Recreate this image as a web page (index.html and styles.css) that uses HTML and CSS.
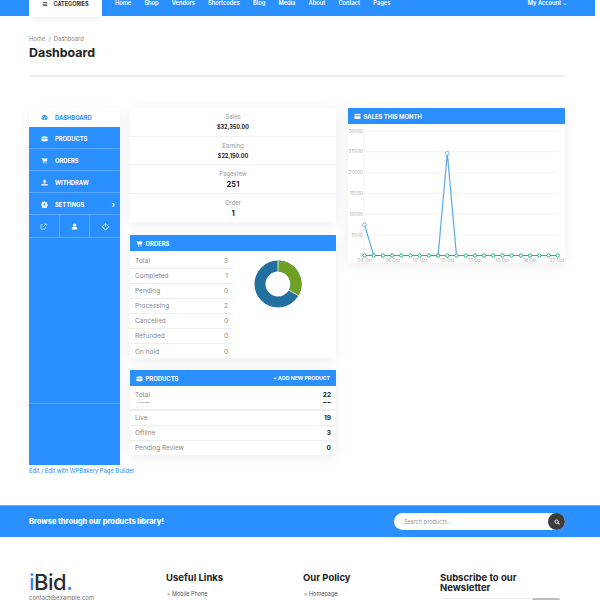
FILE: index.html
```html
<!DOCTYPE html>
<html lang="en">
<head>
    <meta charset="UTF-8">
    <meta name="viewport" content="width=device-width, initial-scale=1.0">
    <title>Dashboard</title>
    <link rel="stylesheet" href="styles.css">
</head>
<body>
    <svg class="sprite" aria-hidden="true">
        <symbol id="i-bars" viewBox="0 0 16 16"><path d="M2 3h12v2H2zM2 7h12v2H2zM2 11h12v2H2z"/></symbol>
        <symbol id="i-gauge" viewBox="0 0 16 16"><path d="M8 2a7 7 0 0 0-7 7c0 1.600.5 3 1.400 4.200h11.200A7 7 0 0 0 15 9a7 7 0 0 0-7-7zM4 10a1.300 1.300 0 1 1 0-2.600A1.300 1.300 0 0 1 4 10zm1.300-3.800a1.200 1.200 0 1 1 0-2.400 1.200 1.200 0 0 1 0 2.400zM9.400 11.500a1.500 1.500 0 0 1-2.800-1c.2-.5.600-.8 1-.9l2-4.400.9.400-1.600 4.500c.5.400.7 1.100.5 1.400zM12 10a1.300 1.300 0 1 1 0-2.600A1.300 1.300 0 0 1 12 10z"/></symbol>
        <symbol id="i-case" viewBox="0 0 16 16"><path d="M6 2h4a1 1 0 0 1 1 1v1h3a1 1 0 0 1 1 1v3H1V5a1 1 0 0 1 1-1h3V3a1 1 0 0 1 1-1zm0 2h4V3H6zM1 9h5.500v1.500h3V9H15v4a1 1 0 0 1-1 1H2a1 1 0 0 1-1-1z"/></symbol>
        <symbol id="i-cart" viewBox="0 0 16 16"><path d="M1 2h2.500l.4 1.500H15l-1.500 6H5.400l.3 1.200H13v1.300H4.600L2.500 3.300H1z"/><circle cx="6" cy="13.700" r="1.300"/><circle cx="12" cy="13.700" r="1.300"/></symbol>
        <symbol id="i-upload" viewBox="0 0 16 16"><path d="M8 1l4.500 4.500H10V10H6V5.500H3.500zM1 11.500h4V12h6v-.5h4V15H1z"/></symbol>
        <symbol id="i-gear" viewBox="0 0 16 16"><path fill-rule="evenodd" d="M6.700 1h2.600l.4 2 1.300.6 1.800-1.100 1.800 1.800-1.100 1.800.6 1.300 2 .4v2.600l-2 .4-.6 1.300 1.100 1.800-1.800 1.800-1.800-1.100-1.300.6-.4 2H6.700l-.4-2-1.300-.6-1.800 1.100-1.800-1.800 1.100-1.800-.6-1.300-2-.4V7.200l2-.4.6-1.300-1.100-1.800 1.800-1.800 1.800 1.100 1.300-.6zM8 5.500a2.500 2.500 0 1 0 0 5 2.500 2.500 0 0 0 0-5z"/></symbol>
        <symbol id="i-link" viewBox="0 0 16 16"><path d="M12 9v4a1 1 0 0 1-1 1H3a1 1 0 0 1-1-1V5a1 1 0 0 1 1-1h4" fill="none" stroke="currentColor" stroke-width="1.400"/><path d="M6.500 9.500L13 3" fill="none" stroke="currentColor" stroke-width="1.500"/><path d="M9.500 1.500H15V7z"/></symbol>
        <symbol id="i-user" viewBox="0 0 16 16"><circle cx="8" cy="5" r="3.600"/><path d="M2 15v-2.500C2 10 4 8.800 5.500 8.500c1.500 1 3.500 1 5 0C12 8.800 14 10 14 12.500V15z"/></symbol>
        <symbol id="i-power" viewBox="0 0 16 16"><path d="M8 1v7" fill="none" stroke="currentColor" stroke-width="2.200"/><path d="M4.800 3.600a6 6 0 1 0 6.400 0" fill="none" stroke="currentColor" stroke-width="2.200"/></symbol>
        <symbol id="i-card" viewBox="0 0 16 16"><path d="M2 2.500h12a1 1 0 0 1 1 1V5H1V3.500a1 1 0 0 1 1-1zM1 7.500h14v5a1 1 0 0 1-1 1H2a1 1 0 0 1-1-1z"/></symbol>
        <symbol id="i-search" viewBox="0 0 16 16"><circle cx="7" cy="7" r="4.500" fill="none" stroke="currentColor" stroke-width="2.400"/><path d="M10.500 10.500L14.500 14.500" stroke="currentColor" stroke-width="2.800"/></symbol>
    </svg>

    <header class="topbar">
        <a class="categories"><svg class="icon"><use href="#i-bars"/></svg>CATEGORIES</a>
        <nav class="main-nav">
            <a>Home</a>
            <a>Shop</a>
            <a>Vendors</a>
            <a>Shortcodes</a>
            <a>Blog</a>
            <a>Media</a>
            <a>About</a>
            <a>Contact</a>
            <a>Pages</a>
        </nav>
        <a class="account">My Account<span class="caret">⌄</span></a>
    </header>

    <section class="page-head">
        <p class="crumbs">Home&nbsp; /&nbsp; Dashboard</p>
        <h1>Dashboard</h1>
    </section>

    <main class="dash">
        <div class="side-col">
            <aside class="sidebar">
                <a class="side-link active"><svg class="icon"><use href="#i-gauge"/></svg>DASHBOARD</a>
                <a class="side-link"><svg class="icon"><use href="#i-case"/></svg>PRODUCTS</a>
                <a class="side-link"><svg class="icon"><use href="#i-cart"/></svg>ORDERS</a>
                <a class="side-link"><svg class="icon"><use href="#i-upload"/></svg>WITHDRAW</a>
                <a class="side-link"><svg class="icon"><use href="#i-gear"/></svg>SETTINGS<span class="chev">›</span></a>
                <div class="side-tools">
                    <a><svg class="icon"><use href="#i-link"/></svg></a>
                    <a><svg class="icon"><use href="#i-user"/></svg></a>
                    <a><svg class="icon"><use href="#i-power"/></svg></a>
                </div>
                <div class="side-fill"></div>
            </aside>
            <p class="edit-links"><a>Edit</a> / <a>Edit with WPBakery Page Builder</a></p>
        </div>

        <div class="mid-col">
            <div class="card stats">
                <div class="stat"><span>Sales</span><b>$32,350.00</b></div>
                <div class="stat"><span>Earning</span><b>$22,150.00</b></div>
                <div class="stat"><span>Pageview</span><b class="big">251</b></div>
                <div class="stat"><span>Order</span><b class="big">1</b></div>
            </div>

            <div class="card orders">
                <h3 class="card-title"><svg class="icon"><use href="#i-cart"/></svg>ORDERS</h3>
                <div class="orders-body">
                    <ul class="rows">
                        <li>Total<span>3</span></li>
                        <li>Completed<span>1</span></li>
                        <li>Pending<span>0</span></li>
                        <li>Processing<span>2</span></li>
                        <li>Cancelled<span>0</span></li>
                        <li>Refunded<span>0</span></li>
                        <li>On hold<span>0</span></li>
                    </ul>
                    <svg class="donut" viewBox="0 0 50 50">
                        <circle cx="25" cy="25" r="18" fill="none" stroke="#21709f" stroke-width="11"/>
                        <path d="M25 7A18 18 0 0 1 40.600 34" fill="none" stroke="#6fa024" stroke-width="11"/>
                        <path d="M25 1V13M35.500 31L46 37" stroke="#fff" stroke-width=".8"/>
                    </svg>
                </div>
            </div>

            <div class="card products">
                <h3 class="card-title"><svg class="icon"><use href="#i-case"/></svg>PRODUCTS<a class="add-new">+ ADD NEW PRODUCT</a></h3>
                <ul class="rows strong">
                    <li class="total-row">Total<span>22</span></li>
                    <li class="cut-row"><div>Total<span>22</span></div></li>
                    <li>Live<span>19</span></li>
                    <li>Offline<span>3</span></li>
                    <li>Pending Review<span>0</span></li>
                </ul>
            </div>
        </div>

        <div class="card sales">
            <h3 class="card-title"><svg class="icon"><use href="#i-card"/></svg>SALES THIS MONTH</h3>
            <svg class="chart" viewBox="348 124 217 139">
                <g class="grid-lines">
                    <path d="M364 131H558M364 151.700H558M364 172.700H558M364 193.300H558M364 214.300H558M364 235H558M364 255.500H558M364 131V255.500"/>
                </g>
                <g class="axis" text-anchor="end">
                    <text x="363" y="132.600">30000</text>
                    <text x="363" y="153.300">25000</text>
                    <text x="363" y="174.300">20000</text>
                    <text x="363" y="194.900">15000</text>
                    <text x="363" y="215.900">10000</text>
                    <text x="363" y="236.600">5000</text>
                    <text x="363" y="257">0</text>
                </g>
                <g class="axis" text-anchor="middle">
                    <text x="365" y="262">04 Oct</text>
                    <text x="392.600" y="262">06 Oct</text>
                    <text x="420.200" y="262">07 Oct</text>
                    <text x="447.400" y="262">10 Oct</text>
                    <text x="475" y="262">13 Oct</text>
                    <text x="502.400" y="262">16 Oct</text>
                    <text x="530" y="262">18 Oct</text>
                    <text x="557" y="262">22 Oct</text>
                </g>
                <polyline class="line-sales" points="364.500,224.700 373.700,255.500 438.100,255.500 447.300,153.300 456.500,255.500"/>
                <g class="dots-sales">
                    <circle cx="364.500" cy="224.700" r="1.900"/>
                    <circle cx="447.300" cy="153.300" r="1.900"/>
                </g>
                <line class="line-zero" x1="364.500" y1="255.500" x2="557.700" y2="255.500"/>
                <g class="dots-zero">
                    <circle cx="364.500" cy="255.500" r="1.700"/>
                    <circle cx="373.700" cy="255.500" r="1.700"/>
                    <circle cx="382.900" cy="255.500" r="1.700"/>
                    <circle cx="392.100" cy="255.500" r="1.700"/>
                    <circle cx="401.300" cy="255.500" r="1.700"/>
                    <circle cx="410.500" cy="255.500" r="1.700"/>
                    <circle cx="419.700" cy="255.500" r="1.700"/>
                    <circle cx="428.900" cy="255.500" r="1.700"/>
                    <circle cx="438.100" cy="255.500" r="1.700"/>
                    <circle cx="447.300" cy="255.500" r="1.700"/>
                    <circle cx="456.500" cy="255.500" r="1.700"/>
                    <circle cx="465.700" cy="255.500" r="1.700"/>
                    <circle cx="474.900" cy="255.500" r="1.700"/>
                    <circle cx="484.100" cy="255.500" r="1.700"/>
                    <circle cx="493.300" cy="255.500" r="1.700"/>
                    <circle cx="502.500" cy="255.500" r="1.700"/>
                    <circle cx="511.700" cy="255.500" r="1.700"/>
                    <circle cx="520.900" cy="255.500" r="1.700"/>
                    <circle cx="530.100" cy="255.500" r="1.700"/>
                    <circle cx="539.300" cy="255.500" r="1.700"/>
                    <circle cx="548.500" cy="255.500" r="1.700"/>
                    <circle cx="557.700" cy="255.500" r="1.700"/>
                </g>
            </svg>
        </div>
    </main>

    <section class="browse">
        <h2>Browse through our products library!</h2>
        <form class="search">
            <input type="text" placeholder="Search products...">
            <button type="button"><svg class="icon"><use href="#i-search"/></svg></button>
        </form>
    </section>

    <footer class="footer">
        <div class="foot-col">
            <div class="logo"><span>i</span>Bid<span>.</span></div>
            <p class="contact">contact@example.com</p>
        </div>
        <div class="foot-col">
            <h4>Useful Links</h4>
            <p class="foot-link">Mobile Phone</p>
        </div>
        <div class="foot-col">
            <h4>Our Policy</h4>
            <p class="foot-link">Homepage</p>
        </div>
        <div class="foot-col">
            <h4>Subscribe to our Newsletter</h4>
            <div class="news-form"><span class="news-input"></span><span class="news-btn"></span></div>
        </div>
    </footer>
</body>
</html>
```

FILE: styles.css
```css
html, body {
    height: 600px;
    overflow: hidden;
}

body {
    font-family: 'Inter', 'Open Sans', sans-serif;
    background-color: #fff;
    color: #333;
    margin: 0;
    padding: 0;
}

p, h1, h2, h3, h4, ul {
    margin: 0;
    padding: 0;
}

ul {
    list-style: none;
}

.sprite {
    display: none;
}

.icon {
    width: 7px;
    height: 7px;
    fill: currentColor;
    flex: none;
}

/* top bar */
.topbar {
    display: flex;
    align-items: flex-start;
    height: 16px;
    width: 595px;
    padding-left: 29px;
    box-sizing: border-box;
    background-color: #2a90ff;
    color: #fff;
    font-size: 5.700px;
    font-weight: 600;
}

.categories {
    display: flex;
    align-items: center;
    justify-content: center;
    gap: 5px;
    width: 73px;
    height: 17px;
    padding-bottom: 10px;
    box-sizing: border-box;
    background-color: #fff;
    color: #333;
    font-weight: 700;
    font-size: 5.500px;
    box-shadow: 0 3px 6px rgba(0, 0, 0, 0.06);
}

.categories .icon {
    width: 6px;
    height: 6px;
}

.main-nav {
    display: flex;
    gap: 13.200px;
    margin-left: 13px;
    line-height: 6px;
}

.account {
    margin-left: auto;
    margin-right: 28px;
    line-height: 6px;
}

.caret {
    margin-left: 2px;
    font-size: 5px;
}

/* page heading */
.page-head {
    margin: 0 35px 0 29px;
    padding-top: 19px;
    height: 40px;
    border-bottom: 2px solid #eeeeee;
}

.crumbs {
    font-size: 5.800px;
    line-height: 7px;
    color: #888;
}

h1 {
    margin-top: 4px;
    font-size: 12.400px;
    line-height: 14px;
    font-weight: 700;
    color: #222;
}

/* dashboard columns */
.dash {
    display: grid;
    grid-template-columns: 91px 206px 219px;
    column-gap: 10px;
    align-items: start;
    height: 397px;
    margin-top: 31px;
    padding-left: 29px;
}

.sales {
    margin-left: 2px;
    height: 155px;
}

.card {
    background-color: #fff;
    box-shadow: 0 2px 12px rgba(0, 0, 0, 0.08);
}

.card-title {
    display: flex;
    align-items: center;
    gap: 2.500px;
    height: 16px;
    padding-left: 6px;
    background-color: #2a90ff;
    color: #fff;
    font-size: 5.900px;
    font-weight: 700;
}

/* sidebar */
.sidebar {
    display: flex;
    flex-direction: column;
    height: 357px;
    background-color: #2a90ff;
    box-shadow: 0 2px 10px rgba(0, 0, 0, 0.06);
}

.side-link {
    display: flex;
    align-items: center;
    gap: 7px;
    height: 20px;
    padding: 1px 0 0 12px;
    border-bottom: 1px solid #5aaaff;
    color: #fff;
    font-size: 5.800px;
    font-weight: 700;
}

.side-link.active {
    height: 18px;
    padding-top: 0;
    background-color: #fff;
    color: #2a90ff;
    border-bottom: 1px solid #fff;
}

.chev {
    margin-left: auto;
    margin-right: 5px;
    font-size: 8px;
}

.side-tools {
    display: flex;
    height: 22px;
    border-bottom: 1px solid #5aaaff;
    color: #fff;
}

.side-tools a {
    flex: 1;
    display: flex;
    align-items: center;
    justify-content: center;
    border-right: 1px solid #5aaaff;
}

.side-tools a:last-child {
    border-right: none;
}

.side-fill {
    flex: 1;
    background-image: linear-gradient(#5aaaff, #5aaaff);
    background-repeat: no-repeat;
    background-size: 100% 1px;
    background-position: 0 165px;
}

.edit-links {
    margin-top: 2px;
    font-size: 5.800px;
    line-height: 7px;
    white-space: nowrap;
    color: #2a90ff;
}

/* middle column */
.mid-col {
    display: flex;
    flex-direction: column;
}

.stats {
    height: 114px;
}

.stat {
    display: flex;
    flex-direction: column;
    align-items: center;
    justify-content: center;
    height: 28.500px;
    padding-top: 1px;
    box-sizing: border-box;
    border-bottom: 1px solid #f3f3f3;
    font-size: 6px;
    color: #999;
}

.stat:last-child {
    border-bottom: none;
}

.stat span {
    line-height: 10px;
    margin-bottom: 1px;
}

.stat b {
    font-size: 5.500px;
    line-height: 9px;
    color: #222;
    font-weight: 700;
}

.stat b.big {
    font-size: 7.500px;
}

.orders {
    margin-top: 13px;
    height: 123px;
}

.orders-body {
    display: flex;
}

.rows li {
    display: flex;
    justify-content: space-between;
    align-items: center;
    height: 15px;
    box-sizing: border-box;
    padding: 0 5px;
    border-bottom: 1.500px solid #eeeeee;
    font-size: 6.500px;
    color: #888;
}

.orders .rows {
    width: 103px;
    padding-top: 3px;
}

.orders .rows li:last-child {
    border-bottom: none;
}

.donut {
    width: 50px;
    height: 50px;
    margin: 8px 0 0 20px;
}

.products {
    margin-top: 12px;
    height: 85px;
}

.add-new {
    margin-left: auto;
    margin-right: 6px;
    font-size: 5.200px;
}

.rows.strong span {
    color: #222;
    font-weight: 700;
}

.products .rows li:last-child {
    border-bottom: none;
}

.products .rows .total-row {
    border-bottom: none;
    height: 16px;
    padding-top: 2px;
}

.products .rows .cut-row {
    display: block;
    height: 8.500px;
    padding: 0 5px;
    overflow: hidden;
    border-bottom: 2px solid #eeeeee;
}

.cut-row div {
    display: flex;
    justify-content: space-between;
    margin-top: -5px;
    line-height: 8px;
}

/* sales chart */
.chart {
    display: block;
    width: 217px;
    height: 139px;
}

.grid-lines path {
    fill: none;
    stroke: #efefef;
    stroke-width: 0.800;
}

.axis text {
    font-size: 4.600px;
    fill: #aaa;
}

.line-sales {
    fill: none;
    stroke: #5aa9e6;
    stroke-width: 1.200;
}

.dots-sales circle {
    fill: #fff;
    stroke: #5aa9e6;
    stroke-width: 0.800;
}

.line-zero {
    stroke: #22b573;
    stroke-width: 1.100;
}

.dots-zero circle {
    fill: #fff;
    stroke: #22b573;
    stroke-width: 1;
}

/* browse band */
.browse {
    display: flex;
    align-items: center;
    justify-content: space-between;
    height: 32px;
    padding: 0 35px 0 29px;
    background-color: #2a90ff;
    border-top: 1px solid #5aaaff;
    box-sizing: border-box;
}

.browse h2 {
    font-size: 7.400px;
    font-weight: 800;
    color: #fff;
}

.search {
    display: flex;
    align-items: center;
    width: 171px;
    height: 17px;
    border-radius: 9px;
    background-color: #fff;
}

.search input {
    flex: 1;
    min-width: 0;
    border: none;
    outline: none;
    background: none;
    padding: 0 0 0 10px;
    font-family: inherit;
    font-size: 5.500px;
    color: #777;
}

.search input::placeholder {
    color: #999;
}

.search button {
    display: flex;
    align-items: center;
    justify-content: center;
    width: 17px;
    height: 17px;
    padding: 0;
    border: none;
    border-radius: 50%;
    background-color: #3c3c3c;
    color: #fff;
}

.search .icon {
    width: 6px;
    height: 6px;
}

/* footer */
.footer {
    display: grid;
    grid-template-columns: 137px 137px 137px 125px;
    margin-top: 36px;
    padding-left: 29px;
}

.logo {
    font-size: 22px;
    line-height: 18px;
    font-weight: 500;
    color: #2b2f36;
    letter-spacing: -0.5px;
}

.logo span {
    color: #2a90ff;
}

.contact {
    margin-top: 3px;
    font-size: 6px;
    line-height: 7px;
    color: #777;
}

.foot-col h4 {
    font-size: 9.500px;
    line-height: 9.500px;
    font-weight: 700;
    color: #222;
}

.foot-link {
    margin-top: 8px;
    padding-left: 6px;
    font-size: 5.500px;
    color: #555;
    position: relative;
}

.foot-link::before {
    content: "»";
    position: absolute;
    left: 1px;
    color: #888;
}

.news-form {
    display: flex;
    gap: 2px;
    margin: 6px 5px 0 3px;
}

.news-input {
    flex: 1;
    height: 10px;
    border-top: 1px solid #ececec;
}

.news-btn {
    width: 28px;
    height: 10px;
    background-color: #bdbdbd;
    border-radius: 2px 2px 0 0;
}
```
